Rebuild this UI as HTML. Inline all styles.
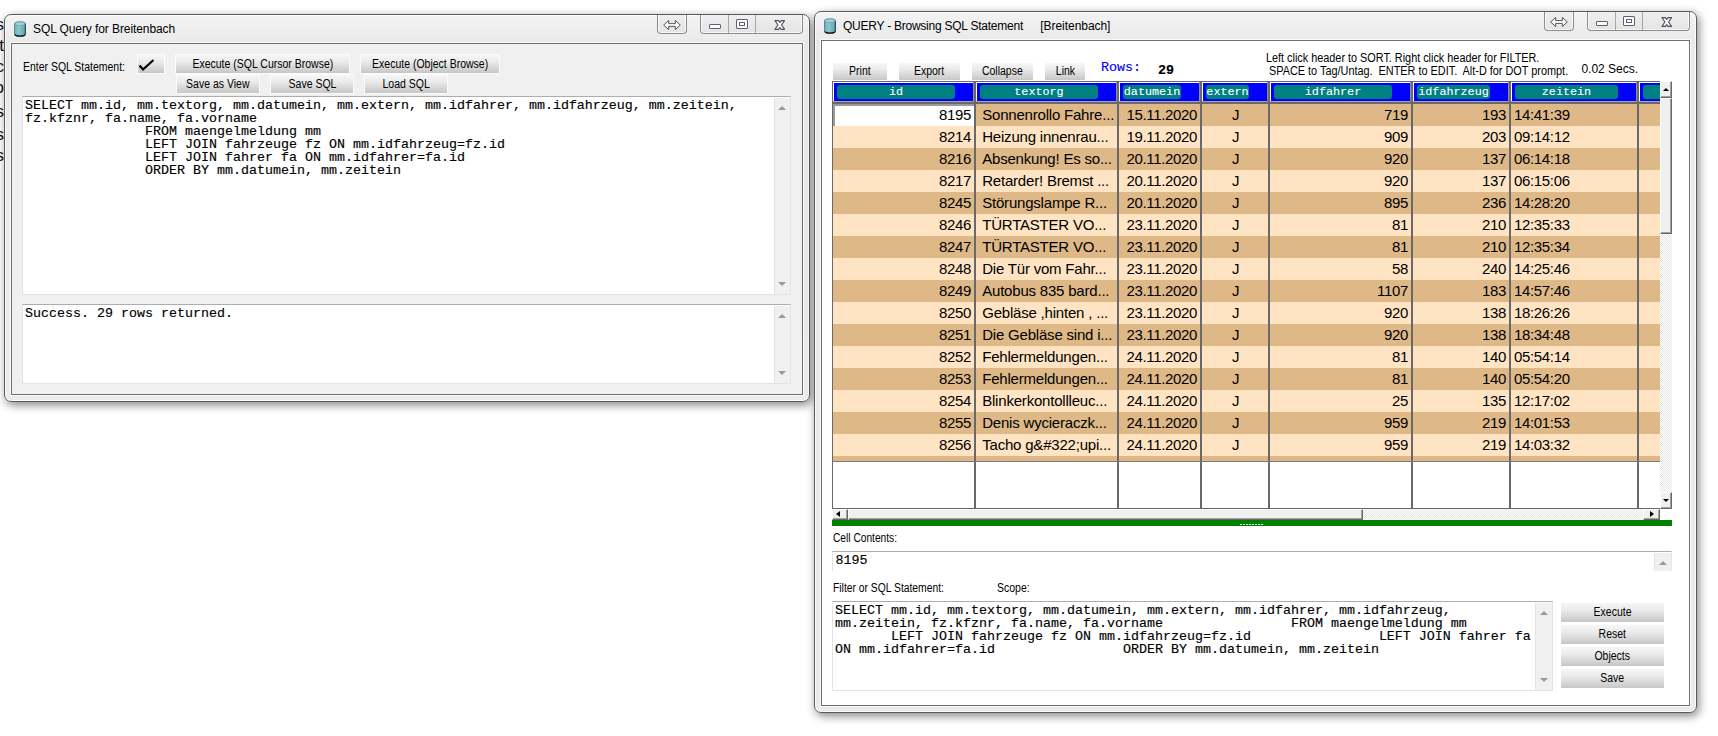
<!DOCTYPE html>
<html lang="en"><head><meta charset="utf-8"><title>SQL Query</title>
<style>
*{box-sizing:border-box;margin:0;padding:0}
html,body{width:1718px;height:736px;overflow:hidden;background:#fff}
body{position:relative;font-family:"Liberation Sans",Arial,sans-serif;color:#000}
.abs{position:absolute}
.win{position:absolute;border:1px solid #5a5a5a;border-radius:7px 7px 7px 7px;
  background:linear-gradient(180deg,#f3f3f3 0,#e9e9e9 30px,#ebebeb 100%);
  box-shadow:2px 3px 10px rgba(0,0,0,.48), inset 0 0 0 1px rgba(255,255,255,.85)}
.client{position:absolute;border:1px solid #6e6e6e;box-shadow:0 0 0 1px rgba(255,255,255,.75)}
.ttl{position:absolute;font-size:12px;line-height:14px;white-space:pre;color:#000}
.lbl{position:absolute;font-size:12.5px;line-height:13px;white-space:pre;color:#000;transform-origin:0 0}
.btn{position:absolute;border:1px solid #fbfbfb;background:linear-gradient(180deg,#f6f6f6 0,#ececec 35%,#d2d2d2 80%,#c6c6c6 100%);
  font-size:12.5px;text-align:center;white-space:pre;color:#000}
.btn span{display:inline-block;transform:scaleX(.84);transform-origin:50% 50%}
.btn.w{border:none}
.ta{position:absolute;background:#fff;border:1px solid #dfe4ea;border-top-color:#abadb3;overflow:hidden}
.mono{font-family:"Liberation Mono","DejaVu Sans Mono",monospace;font-size:13.33px;line-height:13px;-webkit-text-stroke:0.15px currentColor;white-space:pre;color:#000}
.sb{position:absolute;background:#f0f0f0;border-left:1px solid #e4e4e4}
.tri-up{position:absolute;width:0;height:0;border-left:4px solid transparent;border-right:4px solid transparent;border-bottom:4px solid #9a9a9a}
.tri-dn{position:absolute;width:0;height:0;border-left:4px solid transparent;border-right:4px solid transparent;border-top:4px solid #9a9a9a}
.cap{position:absolute;border:1px solid #8c8c8c;border-top:none;border-radius:0 0 4px 4px;background:linear-gradient(180deg,#efefef,#e4e4e4);box-shadow:inset 0 -1px 0 rgba(255,255,255,.7), inset 1px 0 0 rgba(255,255,255,.7), inset -1px 0 0 rgba(255,255,255,.7)}
.cell{position:absolute;font-size:15px;letter-spacing:-0.34px;line-height:22px;height:22px;white-space:pre;color:#000}
.hd{position:absolute;background:#0000ff;top:83px;height:18px}
.pill{position:absolute;background:#008080;border-radius:3px;top:2px;height:14px;color:#fff;font-family:"Liberation Mono","DejaVu Sans Mono",monospace;font-size:11.75px;-webkit-text-stroke:0.1px #fff;line-height:14px;text-align:center;white-space:pre;overflow:hidden}
.vsep{position:absolute;width:2px;background:#696969}
.b3{position:absolute;background:#f0f0f0;border:1px solid;border-color:#fff #696969 #696969 #fff;box-shadow:inset -1px -1px 0 #a0a0a0}
</style></head>
<body>
<div class="abs" style="left:0;top:0;width:4px;height:200px;overflow:hidden">
<div class="abs" style="right:0;top:15px;font-size:17px;line-height:20px;color:#111">s</div>
<div class="abs" style="right:0;top:36px;font-size:17px;line-height:20px;color:#111">t</div>
<div class="abs" style="right:0;top:57px;font-size:17px;line-height:20px;color:#111">c</div>
<div class="abs" style="right:0;top:78px;font-size:17px;line-height:20px;color:#111">o</div>
<div class="abs" style="right:0;top:102px;font-size:17px;line-height:20px;color:#111">s</div>
<div class="abs" style="right:0;top:125px;font-size:17px;line-height:20px;color:#111">s</div>
<div class="abs" style="right:0;top:146px;font-size:17px;line-height:20px;color:#111">s</div>
</div>
<div class="win" style="left:4px;top:14px;width:806px;height:388px"></div>
<svg class="abs" style="left:14px;top:21px" width="12" height="16" viewBox="0 0 12 16">
<defs><linearGradient id="cg14" x1="0" x2="1" y1="0" y2="0"><stop offset="0" stop-color="#6fb0ba"/><stop offset=".4" stop-color="#8cc6ce"/><stop offset="1" stop-color="#5f9fa9"/></linearGradient></defs>
<path d="M0.5 2.6 C0.5 0.3 11.5 0.3 11.5 2.6 L11.5 13.2 C11.5 15.8 0.5 15.8 0.5 13.2 Z" fill="url(#cg14)" stroke="#3f7680" stroke-width=".8"/>
<path d="M0.9 13.4 C1.2 15.7 10.8 15.7 11.1 13.4" fill="none" stroke="#0c1a1c" stroke-width="1.3"/>
<path d="M11.3 3.2 L11.3 13.6" fill="none" stroke="#1d4048" stroke-width=".9"/>
<ellipse cx="6" cy="2.7" rx="5" ry="1.8" fill="#a3d3d9" stroke="#5e9aa3" stroke-width=".6"/></svg>
<div class="ttl" style="left:33px;top:21.5px;letter-spacing:-0.09px;">SQL Query for Breitenbach</div>
<div class="cap" style="left:657px;top:15px;width:30px;height:19px"></div><svg class="abs" style="left:662px;top:18.5px" width="20" height="12" viewBox="0 0 20 12"><path d="M1.7 6 L6.7 1.4 L6.7 4.6 L13.3 4.6 L13.3 1.4 L18.3 6 L13.3 10.6 L13.3 7.4 L6.7 7.4 L6.7 10.6 Z" fill="#fcfcfc" stroke="#55575f" stroke-width="1" stroke-linejoin="miter"/></svg><div class="cap" style="left:700px;top:15px;width:103px;height:19px"></div><div class="abs" style="left:728px;top:15px;width:1px;height:18px;background:#a8a8a8"></div><div class="abs" style="left:755px;top:15px;width:1px;height:18px;background:#a8a8a8"></div><div class="abs" style="left:709px;top:24px;width:12px;height:5px;border:1px solid #5c6070;background:#fbfbfb;border-radius:1px"></div><div class="abs" style="left:736px;top:19px;width:12px;height:10px;border:1px solid #5c6070;background:#fbfbfb;border-radius:1px"></div><div class="abs" style="left:739px;top:22px;width:6px;height:4px;border:1px solid #5c6070;background:#fff"></div><svg class="abs" style="left:773.5px;top:19.5px" width="11.5" height="10" viewBox="0 0 12 11"><path d="M0.7 0.7 H4.6 L6 2.7 L7.4 0.7 H11.3 L8 5.5 L11.3 10.3 H7.4 L6 8.3 L4.6 10.3 H0.7 L4 5.5 Z" fill="#fbfbfb" stroke="#4e5268" stroke-width="1.25" stroke-linejoin="round"/></svg>
<div class="client" style="left:11px;top:43px;width:792px;height:352px;background:#f0f0f0"></div>
<div class="lbl" style="left:22.5px;top:61px;transform:scaleX(.837);">Enter SQL Statement:</div>
<div class="btn" style="left:137px;top:54px;width:28px;height:20px"></div>
<svg class="abs" style="left:138px;top:57.5px" width="18" height="15" viewBox="0 0 18 15"><path d="M1.5 7.5 L5 11.5 L15.5 2" fill="none" stroke="#000" stroke-width="2.2" stroke-linecap="butt" stroke-linejoin="miter"/></svg>
<div class="btn" style="left:175px;top:54px;width:175px;height:20px;line-height:18px"><span>Execute (SQL Cursor Browse)</span></div>
<div class="btn" style="left:360px;top:54px;width:140px;height:20px;line-height:18px"><span>Execute (Object Browse)</span></div>
<div class="btn" style="left:176px;top:74px;width:84px;height:20px;line-height:18px"><span>Save as View</span></div>
<div class="btn" style="left:270px;top:74px;width:84px;height:20px;line-height:18px"><span>Save SQL</span></div>
<div class="btn" style="left:364px;top:74px;width:84px;height:20px;line-height:18px"><span>Load SQL</span></div>
<div class="ta" style="left:22px;top:96px;width:769px;height:199px">
<div class="mono abs" style="left:2px;top:2px">SELECT mm.id, mm.textorg, mm.datumein, mm.extern, mm.idfahrer, mm.idfahrzeug, mm.zeitein,
fz.kfznr, fa.name, fa.vorname
               FROM maengelmeldung mm
               LEFT JOIN fahrzeuge fz ON mm.idfahrzeug=fz.id
               LEFT JOIN fahrer fa ON mm.idfahrer=fa.id
               ORDER BY mm.datumein, mm.zeitein</div>
<div class="sb" style="left:751px;top:1px;width:16px;height:196px"><div class="tri-up" style="left:3px;top:8px"></div><div class="tri-dn" style="left:3px;bottom:8px"></div></div>
</div>
<div class="ta" style="left:22px;top:304px;width:769px;height:80px">
<div class="mono abs" style="left:2px;top:2px">Success. 29 rows returned.</div>
<div class="sb" style="left:751px;top:1px;width:16px;height:77px"><div class="tri-up" style="left:3px;top:8px"></div><div class="tri-dn" style="left:3px;bottom:8px"></div></div>
</div>
<div class="win" style="left:814px;top:11px;width:883px;height:702px"></div>
<svg class="abs" style="left:824px;top:18px" width="12" height="16" viewBox="0 0 12 16">
<defs><linearGradient id="cg824" x1="0" x2="1" y1="0" y2="0"><stop offset="0" stop-color="#6fb0ba"/><stop offset=".4" stop-color="#8cc6ce"/><stop offset="1" stop-color="#5f9fa9"/></linearGradient></defs>
<path d="M0.5 2.6 C0.5 0.3 11.5 0.3 11.5 2.6 L11.5 13.2 C11.5 15.8 0.5 15.8 0.5 13.2 Z" fill="url(#cg824)" stroke="#3f7680" stroke-width=".8"/>
<path d="M0.9 13.4 C1.2 15.7 10.8 15.7 11.1 13.4" fill="none" stroke="#0c1a1c" stroke-width="1.3"/>
<path d="M11.3 3.2 L11.3 13.6" fill="none" stroke="#1d4048" stroke-width=".9"/>
<ellipse cx="6" cy="2.7" rx="5" ry="1.8" fill="#a3d3d9" stroke="#5e9aa3" stroke-width=".6"/></svg>
<div class="ttl" style="left:843px;top:18.5px;letter-spacing:-0.24px;">QUERY - Browsing SQL Statement</div>
<div class="ttl" style="left:1040.3px;top:18.5px;letter-spacing:-0.05px;">[Breitenbach]</div>
<div class="cap" style="left:1544px;top:12px;width:30px;height:19px"></div><svg class="abs" style="left:1549px;top:15.5px" width="20" height="12" viewBox="0 0 20 12"><path d="M1.7 6 L6.7 1.4 L6.7 4.6 L13.3 4.6 L13.3 1.4 L18.3 6 L13.3 10.6 L13.3 7.4 L6.7 7.4 L6.7 10.6 Z" fill="#fcfcfc" stroke="#55575f" stroke-width="1" stroke-linejoin="miter"/></svg><div class="cap" style="left:1587px;top:12px;width:103px;height:19px"></div><div class="abs" style="left:1615px;top:12px;width:1px;height:18px;background:#a8a8a8"></div><div class="abs" style="left:1642px;top:12px;width:1px;height:18px;background:#a8a8a8"></div><div class="abs" style="left:1596px;top:21px;width:12px;height:5px;border:1px solid #5c6070;background:#fbfbfb;border-radius:1px"></div><div class="abs" style="left:1623px;top:16px;width:12px;height:10px;border:1px solid #5c6070;background:#fbfbfb;border-radius:1px"></div><div class="abs" style="left:1626px;top:19px;width:6px;height:4px;border:1px solid #5c6070;background:#fff"></div><svg class="abs" style="left:1660.5px;top:16.5px" width="11.5" height="10" viewBox="0 0 12 11"><path d="M0.7 0.7 H4.6 L6 2.7 L7.4 0.7 H11.3 L8 5.5 L11.3 10.3 H7.4 L6 8.3 L4.6 10.3 H0.7 L4 5.5 Z" fill="#fbfbfb" stroke="#4e5268" stroke-width="1.25" stroke-linejoin="round"/></svg>
<div class="client" style="left:821px;top:40px;width:869px;height:666px;background:#fff"></div>
<div class="btn w" style="left:833px;top:63px;width:54px;height:17px;line-height:17px"><span>Print</span></div>
<div class="btn w" style="left:899px;top:63px;width:61px;height:17px;line-height:17px"><span>Export</span></div>
<div class="btn w" style="left:972px;top:63px;width:61px;height:17px;line-height:17px"><span>Collapse</span></div>
<div class="btn w" style="left:1045px;top:63px;width:40px;height:17px;line-height:17px"><span>Link</span></div>
<div class="mono abs" style="left:1101px;top:61px;color:#0000ff">Rows:</div>
<div class="mono abs" style="left:1158px;top:64px;font-weight:bold">29</div>
<div class="lbl" style="left:1266.4px;top:52px;transform:scaleX(.868);">Left click header to SORT. Right click header for FILTER.</div>
<div class="lbl" style="left:1269.2px;top:65px;transform:scaleX(.87);">SPACE to Tag/Untag.  ENTER to EDIT.  Alt-D for DOT prompt.</div>
<div class="lbl" style="left:1581.4px;top:61.5px;font-size:12px;line-height:14px;">0.02 Secs.</div>
<div class="abs" style="left:832px;top:81px;width:828px;height:428px;background:#fff;border:1px solid #696969;border-right:none"></div>
<div class="abs" style="left:833px;top:104px;width:827px;height:357px;overflow:hidden;background:repeating-linear-gradient(180deg,#deb887 0,#deb887 22px,#ffe4c4 22px,#ffe4c4 44px)"></div>
<div class="abs" style="left:833px;top:101px;width:827px;height:1px;background:#a8a8a0"></div>
<div class="abs" style="left:833px;top:102px;width:827px;height:2px;background:#696969"></div>
<div class="abs" style="left:833px;top:82px;width:827px;height:1px;background:#fff"></div>
<div class="abs" style="left:833px;top:82px;width:1px;height:19px;background:#fff"></div>
<div class="hd" style="left:834px;width:140px;overflow:hidden"><div class="pill" style="left:3px;width:118px">id</div></div>
<div class="hd" style="left:977px;width:140px;overflow:hidden"><div class="pill" style="left:3px;width:118px">textorg</div></div>
<div class="hd" style="left:1120px;width:80px;overflow:hidden"><div class="pill" style="left:3px;width:58px">datumein</div></div>
<div class="hd" style="left:1203px;width:65px;overflow:hidden"><div class="pill" style="left:3px;width:43px">extern</div></div>
<div class="hd" style="left:1271px;width:140px;overflow:hidden"><div class="pill" style="left:3px;width:118px">idfahrer</div></div>
<div class="hd" style="left:1414px;width:95px;overflow:hidden"><div class="pill" style="left:3px;width:73px">idfahrzeug</div></div>
<div class="hd" style="left:1512px;width:125px;overflow:hidden"><div class="pill" style="left:3px;width:103px">zeitein</div></div>
<div class="hd" style="left:1640px;width:20px;overflow:hidden"><div class="pill" style="left:3px;width:30px"></div></div>
<div class="abs" style="left:833px;top:104px;width:141px;height:22px;background:#fff;border-top:2px solid #9a9a9a;border-left:2px solid #9a9a9a"></div>
<div class="vsep" style="left:974px;top:82px;height:426px"></div>
<div class="abs" style="left:976px;top:82px;width:1px;height:19px;background:#fff"></div>
<div class="abs" style="left:973px;top:82px;width:1px;height:20px;background:#8f8f8a"></div>
<div class="vsep" style="left:1117px;top:82px;height:426px"></div>
<div class="abs" style="left:1119px;top:82px;width:1px;height:19px;background:#fff"></div>
<div class="abs" style="left:1116px;top:82px;width:1px;height:20px;background:#8f8f8a"></div>
<div class="vsep" style="left:1200px;top:82px;height:426px"></div>
<div class="abs" style="left:1202px;top:82px;width:1px;height:19px;background:#fff"></div>
<div class="abs" style="left:1199px;top:82px;width:1px;height:20px;background:#8f8f8a"></div>
<div class="vsep" style="left:1268px;top:82px;height:426px"></div>
<div class="abs" style="left:1270px;top:82px;width:1px;height:19px;background:#fff"></div>
<div class="abs" style="left:1267px;top:82px;width:1px;height:20px;background:#8f8f8a"></div>
<div class="vsep" style="left:1411px;top:82px;height:426px"></div>
<div class="abs" style="left:1413px;top:82px;width:1px;height:19px;background:#fff"></div>
<div class="abs" style="left:1410px;top:82px;width:1px;height:20px;background:#8f8f8a"></div>
<div class="vsep" style="left:1509px;top:82px;height:426px"></div>
<div class="abs" style="left:1511px;top:82px;width:1px;height:19px;background:#fff"></div>
<div class="abs" style="left:1508px;top:82px;width:1px;height:20px;background:#8f8f8a"></div>
<div class="vsep" style="left:1637px;top:82px;height:426px"></div>
<div class="abs" style="left:1639px;top:82px;width:1px;height:19px;background:#fff"></div>
<div class="abs" style="left:1636px;top:82px;width:1px;height:20px;background:#8f8f8a"></div>
<div class="abs" style="left:833px;top:461px;width:827px;height:1px;background:#7a7a7a"></div>
<div class="cell" style="right:747px;top:104px">8195</div>
<div class="cell" style="left:982.2px;top:104px;letter-spacing:-0.2px;">Sonnenrollo Fahre...</div>
<div class="cell" style="left:1126.5px;top:104px;">15.11.2020</div>
<div class="cell" style="left:1203px;width:65px;text-align:center;top:104px">J</div>
<div class="cell" style="right:310px;top:104px">719</div>
<div class="cell" style="right:212px;top:104px">193</div>
<div class="cell" style="left:1514px;top:104px;">14:41:39</div>
<div class="cell" style="right:747px;top:126px">8214</div>
<div class="cell" style="left:982.2px;top:126px;letter-spacing:-0.2px;">Heizung innenrau...</div>
<div class="cell" style="left:1126.5px;top:126px;">19.11.2020</div>
<div class="cell" style="left:1203px;width:65px;text-align:center;top:126px">J</div>
<div class="cell" style="right:310px;top:126px">909</div>
<div class="cell" style="right:212px;top:126px">203</div>
<div class="cell" style="left:1514px;top:126px;">09:14:12</div>
<div class="cell" style="right:747px;top:148px">8216</div>
<div class="cell" style="left:982.2px;top:148px;letter-spacing:-0.2px;">Absenkung! Es so...</div>
<div class="cell" style="left:1126.5px;top:148px;">20.11.2020</div>
<div class="cell" style="left:1203px;width:65px;text-align:center;top:148px">J</div>
<div class="cell" style="right:310px;top:148px">920</div>
<div class="cell" style="right:212px;top:148px">137</div>
<div class="cell" style="left:1514px;top:148px;">06:14:18</div>
<div class="cell" style="right:747px;top:170px">8217</div>
<div class="cell" style="left:982.2px;top:170px;letter-spacing:-0.2px;">Retarder! Bremst ...</div>
<div class="cell" style="left:1126.5px;top:170px;">20.11.2020</div>
<div class="cell" style="left:1203px;width:65px;text-align:center;top:170px">J</div>
<div class="cell" style="right:310px;top:170px">920</div>
<div class="cell" style="right:212px;top:170px">137</div>
<div class="cell" style="left:1514px;top:170px;">06:15:06</div>
<div class="cell" style="right:747px;top:192px">8245</div>
<div class="cell" style="left:982.2px;top:192px;letter-spacing:-0.2px;">Störungslampe R...</div>
<div class="cell" style="left:1126.5px;top:192px;">20.11.2020</div>
<div class="cell" style="left:1203px;width:65px;text-align:center;top:192px">J</div>
<div class="cell" style="right:310px;top:192px">895</div>
<div class="cell" style="right:212px;top:192px">236</div>
<div class="cell" style="left:1514px;top:192px;">14:28:20</div>
<div class="cell" style="right:747px;top:214px">8246</div>
<div class="cell" style="left:982.2px;top:214px;letter-spacing:-0.2px;">TÜRTASTER VO...</div>
<div class="cell" style="left:1126.5px;top:214px;">23.11.2020</div>
<div class="cell" style="left:1203px;width:65px;text-align:center;top:214px">J</div>
<div class="cell" style="right:310px;top:214px">81</div>
<div class="cell" style="right:212px;top:214px">210</div>
<div class="cell" style="left:1514px;top:214px;">12:35:33</div>
<div class="cell" style="right:747px;top:236px">8247</div>
<div class="cell" style="left:982.2px;top:236px;letter-spacing:-0.2px;">TÜRTASTER VO...</div>
<div class="cell" style="left:1126.5px;top:236px;">23.11.2020</div>
<div class="cell" style="left:1203px;width:65px;text-align:center;top:236px">J</div>
<div class="cell" style="right:310px;top:236px">81</div>
<div class="cell" style="right:212px;top:236px">210</div>
<div class="cell" style="left:1514px;top:236px;">12:35:34</div>
<div class="cell" style="right:747px;top:258px">8248</div>
<div class="cell" style="left:982.2px;top:258px;letter-spacing:-0.2px;">Die Tür vom Fahr...</div>
<div class="cell" style="left:1126.5px;top:258px;">23.11.2020</div>
<div class="cell" style="left:1203px;width:65px;text-align:center;top:258px">J</div>
<div class="cell" style="right:310px;top:258px">58</div>
<div class="cell" style="right:212px;top:258px">240</div>
<div class="cell" style="left:1514px;top:258px;">14:25:46</div>
<div class="cell" style="right:747px;top:280px">8249</div>
<div class="cell" style="left:982.2px;top:280px;letter-spacing:-0.2px;">Autobus 835 bard...</div>
<div class="cell" style="left:1126.5px;top:280px;">23.11.2020</div>
<div class="cell" style="left:1203px;width:65px;text-align:center;top:280px">J</div>
<div class="cell" style="right:310px;top:280px">1107</div>
<div class="cell" style="right:212px;top:280px">183</div>
<div class="cell" style="left:1514px;top:280px;">14:57:46</div>
<div class="cell" style="right:747px;top:302px">8250</div>
<div class="cell" style="left:982.2px;top:302px;letter-spacing:-0.2px;">Gebläse ,hinten , ...</div>
<div class="cell" style="left:1126.5px;top:302px;">23.11.2020</div>
<div class="cell" style="left:1203px;width:65px;text-align:center;top:302px">J</div>
<div class="cell" style="right:310px;top:302px">920</div>
<div class="cell" style="right:212px;top:302px">138</div>
<div class="cell" style="left:1514px;top:302px;">18:26:26</div>
<div class="cell" style="right:747px;top:324px">8251</div>
<div class="cell" style="left:982.2px;top:324px;letter-spacing:-0.2px;">Die Gebläse sind i...</div>
<div class="cell" style="left:1126.5px;top:324px;">23.11.2020</div>
<div class="cell" style="left:1203px;width:65px;text-align:center;top:324px">J</div>
<div class="cell" style="right:310px;top:324px">920</div>
<div class="cell" style="right:212px;top:324px">138</div>
<div class="cell" style="left:1514px;top:324px;">18:34:48</div>
<div class="cell" style="right:747px;top:346px">8252</div>
<div class="cell" style="left:982.2px;top:346px;letter-spacing:-0.2px;">Fehlermeldungen...</div>
<div class="cell" style="left:1126.5px;top:346px;">24.11.2020</div>
<div class="cell" style="left:1203px;width:65px;text-align:center;top:346px">J</div>
<div class="cell" style="right:310px;top:346px">81</div>
<div class="cell" style="right:212px;top:346px">140</div>
<div class="cell" style="left:1514px;top:346px;">05:54:14</div>
<div class="cell" style="right:747px;top:368px">8253</div>
<div class="cell" style="left:982.2px;top:368px;letter-spacing:-0.2px;">Fehlermeldungen...</div>
<div class="cell" style="left:1126.5px;top:368px;">24.11.2020</div>
<div class="cell" style="left:1203px;width:65px;text-align:center;top:368px">J</div>
<div class="cell" style="right:310px;top:368px">81</div>
<div class="cell" style="right:212px;top:368px">140</div>
<div class="cell" style="left:1514px;top:368px;">05:54:20</div>
<div class="cell" style="right:747px;top:390px">8254</div>
<div class="cell" style="left:982.2px;top:390px;letter-spacing:-0.2px;">Blinkerkontollleuc...</div>
<div class="cell" style="left:1126.5px;top:390px;">24.11.2020</div>
<div class="cell" style="left:1203px;width:65px;text-align:center;top:390px">J</div>
<div class="cell" style="right:310px;top:390px">25</div>
<div class="cell" style="right:212px;top:390px">135</div>
<div class="cell" style="left:1514px;top:390px;">12:17:02</div>
<div class="cell" style="right:747px;top:412px">8255</div>
<div class="cell" style="left:982.2px;top:412px;letter-spacing:-0.2px;">Denis wycieraczk...</div>
<div class="cell" style="left:1126.5px;top:412px;">24.11.2020</div>
<div class="cell" style="left:1203px;width:65px;text-align:center;top:412px">J</div>
<div class="cell" style="right:310px;top:412px">959</div>
<div class="cell" style="right:212px;top:412px">219</div>
<div class="cell" style="left:1514px;top:412px;">14:01:53</div>
<div class="cell" style="right:747px;top:434px">8256</div>
<div class="cell" style="left:982.2px;top:434px;letter-spacing:-0.2px;">Tacho g&amp;#322;upi...</div>
<div class="cell" style="left:1126.5px;top:434px;">24.11.2020</div>
<div class="cell" style="left:1203px;width:65px;text-align:center;top:434px">J</div>
<div class="cell" style="right:310px;top:434px">959</div>
<div class="cell" style="right:212px;top:434px">219</div>
<div class="cell" style="left:1514px;top:434px;">14:03:32</div>
<div class="abs" style="left:1660px;top:82px;width:12px;height:427px;background:repeating-conic-gradient(#fff 0 25%,#e6e6e6 0 50%) 0 0/2px 2px"></div>
<div class="b3" style="left:1660px;top:81px;width:12px;height:17px"></div>
<div class="abs" style="left:1663px;top:87.5px;width:0;height:0;border-left:3px solid transparent;border-right:3px solid transparent;border-bottom:3px solid #000"></div>
<div class="b3" style="left:1660px;top:98px;width:12px;height:136px"></div>
<div class="b3" style="left:1660px;top:492px;width:12px;height:17px"></div>
<div class="abs" style="left:1663px;top:499px;width:0;height:0;border-left:3px solid transparent;border-right:3px solid transparent;border-top:3px solid #000"></div>
<div class="abs" style="left:832px;top:509px;width:828px;height:11px;background:repeating-conic-gradient(#fff 0 25%,#e6e6e6 0 50%) 0 0/2px 2px"></div>
<div class="b3" style="left:832px;top:509px;width:16px;height:11px"></div>
<div class="abs" style="left:836px;top:511px;width:0;height:0;border-top:3.5px solid transparent;border-bottom:3.5px solid transparent;border-right:4px solid #000"></div>
<div class="b3" style="left:848px;top:509px;width:515px;height:11px"></div>
<div class="b3" style="left:1643px;top:509px;width:17px;height:11px"></div>
<div class="abs" style="left:1650px;top:511px;width:0;height:0;border-top:3.5px solid transparent;border-bottom:3.5px solid transparent;border-left:4px solid #000"></div>
<div class="abs" style="left:832px;top:520px;width:840px;height:6px;background:#008000"></div>
<div class="abs" style="left:1240px;top:524px;width:23px;height:1px;background:repeating-linear-gradient(90deg,#e8ffe8 0,#e8ffe8 2px,transparent 2px,transparent 3px)"></div>
<div class="lbl" style="left:832.8px;top:532px;transform:scaleX(.815);">Cell Contents:</div>
<div class="ta" style="left:832px;top:551px;width:840px;height:20px;border-bottom:none;border-right-color:#e8e8e8">
<div class="mono abs" style="left:2.5px;top:2px">8195</div>
<div class="sb" style="left:821px;top:1px;width:18px;height:19px"><div class="tri-up" style="left:4px;top:8px"></div></div>
</div>
<div class="lbl" style="left:832.8px;top:582px;transform:scaleX(.826);">Filter or SQL Statement:</div>
<div class="lbl" style="left:996.7px;top:582px;transform:scaleX(.838);">Scope:</div>
<div class="ta" style="left:832px;top:601px;width:721px;height:90px">
<div class="mono abs" style="left:2px;top:2px">SELECT mm.id, mm.textorg, mm.datumein, mm.extern, mm.idfahrer, mm.idfahrzeug,
mm.zeitein, fz.kfznr, fa.name, fa.vorname                FROM maengelmeldung mm
       LEFT JOIN fahrzeuge fz ON mm.idfahrzeug=fz.id                LEFT JOIN fahrer fa
ON mm.idfahrer=fa.id                ORDER BY mm.datumein, mm.zeitein</div>
<div class="sb" style="left:702px;top:1px;width:17px;height:87px"><div class="tri-up" style="left:4px;top:8px"></div><div class="tri-dn" style="left:4px;bottom:8px"></div></div>
</div>
<div class="btn w" style="left:1561px;top:603px;width:103px;height:19px;line-height:19px"><span>Execute</span></div>
<div class="btn w" style="left:1561px;top:625px;width:103px;height:19px;line-height:19px"><span>Reset</span></div>
<div class="btn w" style="left:1561px;top:647px;width:103px;height:19px;line-height:19px"><span>Objects</span></div>
<div class="btn w" style="left:1561px;top:669px;width:103px;height:19px;line-height:19px"><span>Save</span></div>
</body></html>
